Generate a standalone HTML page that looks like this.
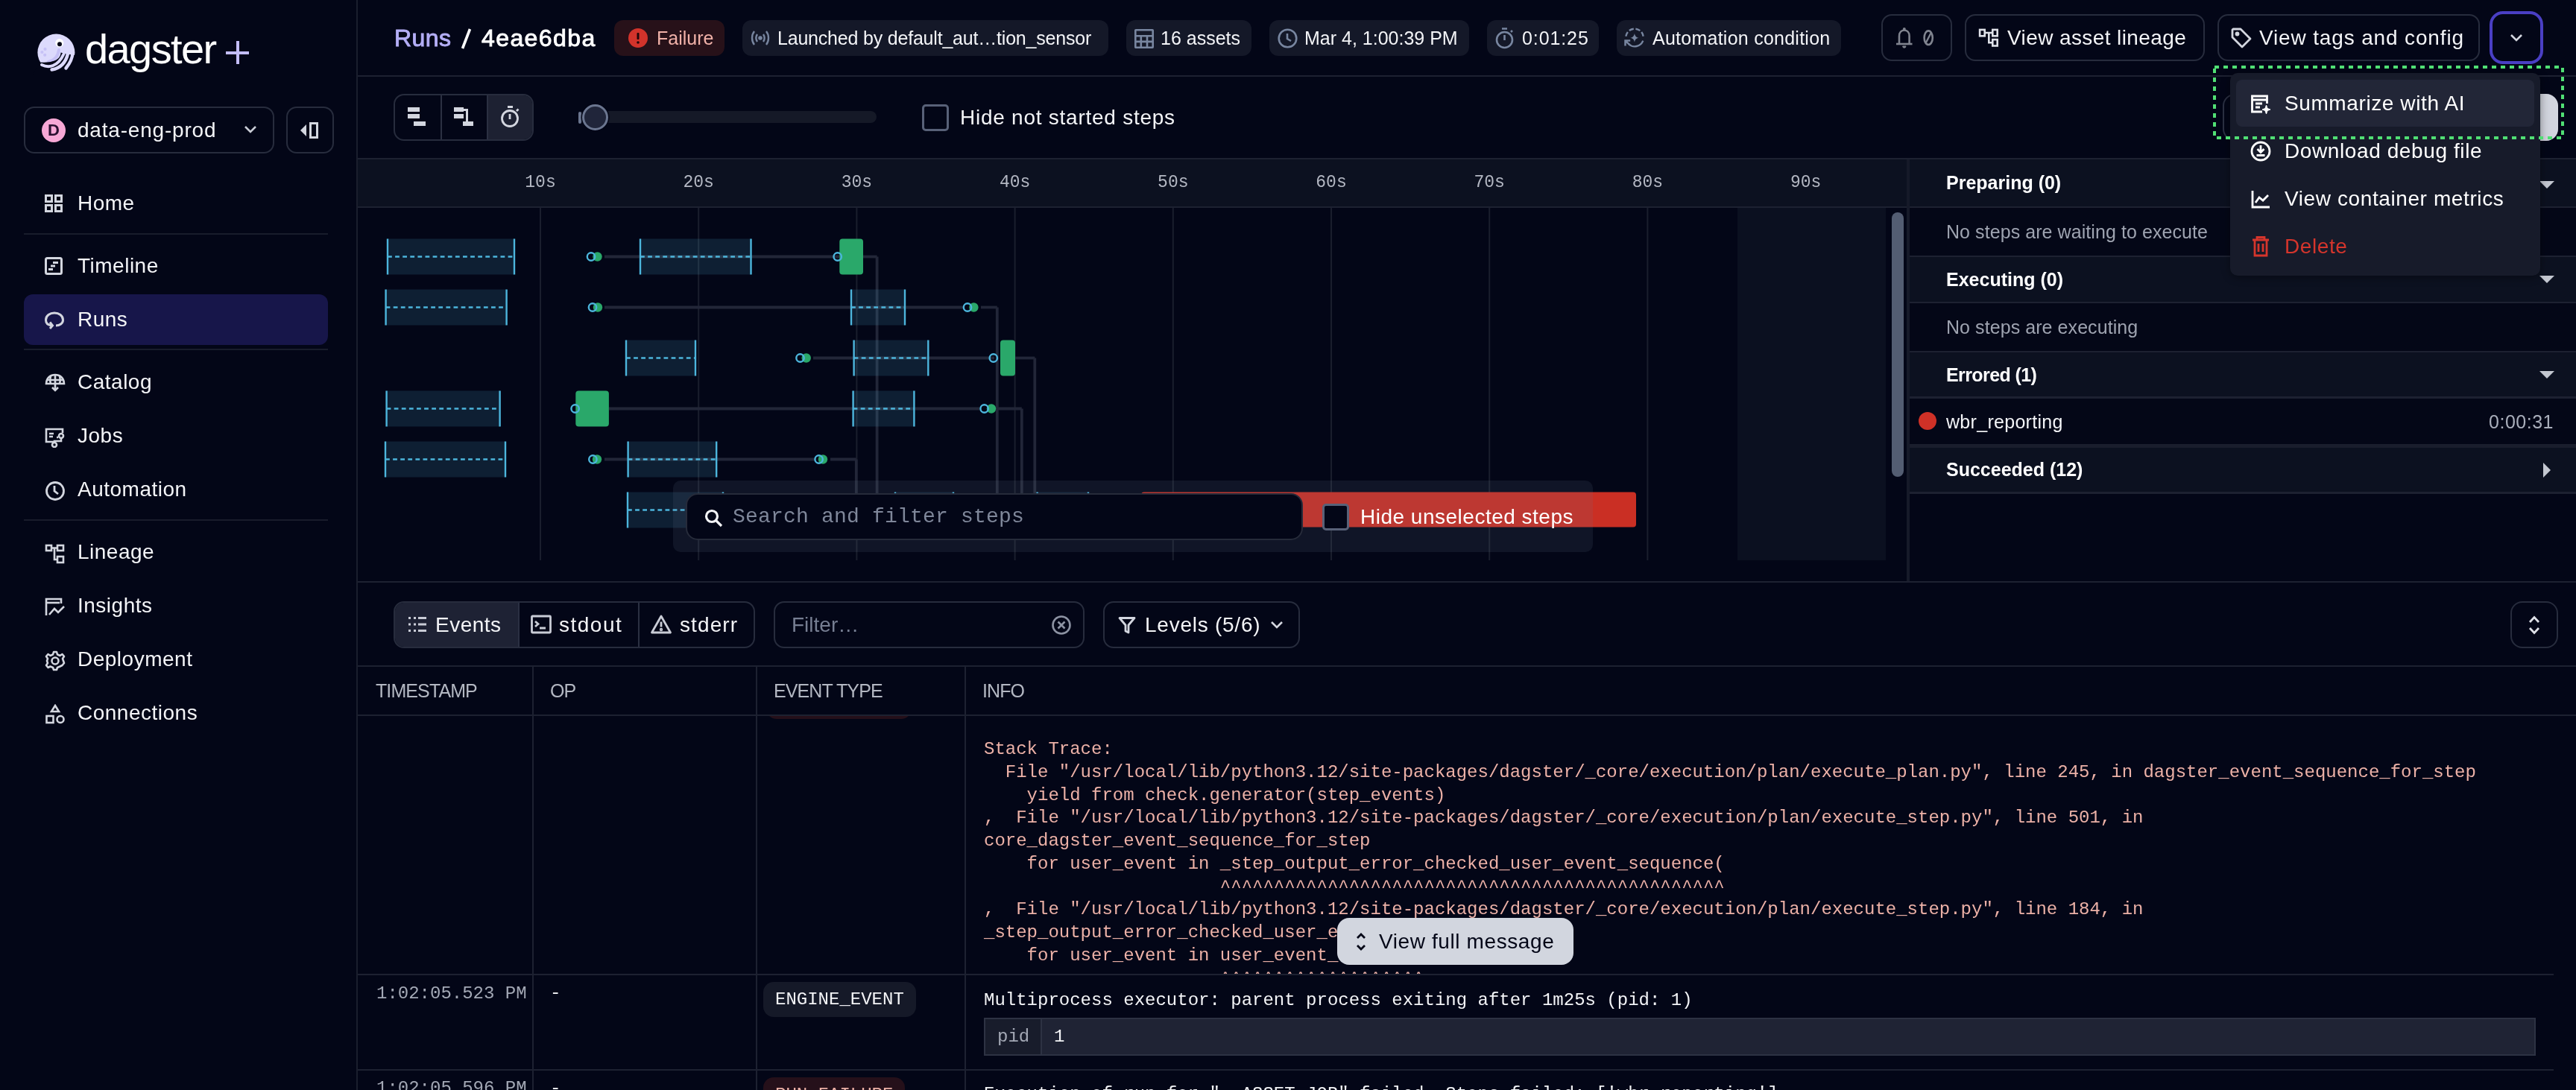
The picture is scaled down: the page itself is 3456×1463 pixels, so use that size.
<!DOCTYPE html>
<html><head><meta charset="utf-8">
<style>
*{box-sizing:border-box}
html,body{margin:0;padding:0}
body{will-change:transform;-webkit-font-smoothing:antialiased}
body{width:3456px;height:1463px;overflow:hidden;background:#030617;font-family:"Liberation Sans",sans-serif;color:#f3f4f7;position:relative}
.a{position:absolute}
.mono{font-family:"Liberation Mono",monospace}
.hl{position:absolute;height:2px;background:#1d2131}
.vl{position:absolute;width:2px;background:#1d2131}
.nav{position:absolute;left:32px;width:408px;height:68px;border-radius:12px}
.nav svg{position:absolute;left:28px;top:22px}
.nav span{position:absolute;left:72px;top:0;line-height:68px;font-size:28px;color:#f3f4f7;letter-spacing:0.5px}
.chip{position:absolute;top:27px;height:48px;border-radius:12px;background:#141828}
.chip svg{position:absolute;top:11px}
.chip span{position:absolute;top:0;line-height:48px;font-size:25px;color:#f3f4f7;white-space:nowrap}
.btn{position:absolute;border:2px solid #272c3d;border-radius:14px}
.btn span{position:absolute;white-space:nowrap}
</style></head><body>

<!-- SIDEBAR -->
<div class="a" style="left:0;top:0;width:478px;height:1463px;background:#030617"></div>
<div class="vl" style="left:478px;top:0;height:1463px;background:#1a1e2d"></div>

<!-- logo -->
<svg class="a" style="left:44px;top:40px" width="64" height="60" viewBox="0 0 64 60">
  <circle cx="31.4" cy="30.5" r="25" fill="#dcdafc"/>
  <path d="M35 27 C34 35, 30 41, 21 43" stroke="#c6c1f6" stroke-width="4" fill="none" stroke-linecap="round"/>
  <path d="M37.6 30.5 C37 39, 30 44.5, 9 43.8 L0 60 L64 60 L64 35 L53 33.5 L45 32.5 Z" fill="#030617"/>
  <path d="M12 47 C21 51.5, 33.5 50, 41.5 32.5" stroke="#dcdafc" stroke-width="4" fill="none" stroke-linecap="round"/>
  <path d="M25.5 53.5 C35 52, 44 46, 47.3 31" stroke="#dcdafc" stroke-width="4.4" fill="none" stroke-linecap="round"/>
  <path d="M44.5 51.5 C49 46, 53 40, 53.5 31" stroke="#dcdafc" stroke-width="4.4" fill="none" stroke-linecap="round"/>
  <circle cx="35.8" cy="17.6" r="5.6" fill="#fff"/><circle cx="36" cy="19.3" r="3" fill="#030617"/>
  <circle cx="16.5" cy="25.9" r="2.1" fill="#c6c1f6"/><circle cx="12.4" cy="30" r="2.1" fill="#c6c1f6"/><circle cx="16.2" cy="33.8" r="2.1" fill="#c6c1f6"/>
</svg>
<div class="a" style="left:114px;top:26px;font-size:56px;line-height:80px;color:#fff;letter-spacing:-1.6px">dagster</div>
<div class="a" style="left:303px;top:69px;width:31px;height:4px;background:#c3bdf7"></div>
<div class="a" style="left:316.5px;top:55px;width:4px;height:31px;background:#c3bdf7"></div>

<!-- workspace selector -->
<div class="btn" style="left:32px;top:143px;width:336px;height:63px;border-radius:14px"></div>
<div class="a" style="left:56px;top:159px;width:32px;height:32px;border-radius:16px;background:#f7a8d6;color:#2a1030;font-size:22px;font-weight:bold;text-align:center;line-height:32px">D</div>
<div class="a" style="left:104px;top:143px;line-height:63px;font-size:28px;color:#f3f4f7;letter-spacing:0.8px">data-eng-prod</div>
<svg class="a" style="left:326px;top:166px" width="20" height="16" viewBox="0 0 20 16"><path d="M3 4 L10 11 L17 4" stroke="#c9ccd6" stroke-width="2.6" fill="none"/></svg>
<div class="btn" style="left:384px;top:143px;width:64px;height:63px;border-radius:14px"></div>
<svg class="a" style="left:401px;top:162px" width="30" height="26" viewBox="0 0 30 26"><path d="M2 13 L10 5 L10 21 Z" fill="#d3d6df"/><rect x="15.5" y="3.5" width="9" height="19" stroke="#d3d6df" stroke-width="3" fill="none"/></svg>

<!-- nav -->
<div class="nav" style="top:239px"><svg width="24" height="24" viewBox="0 0 24 24" fill="none" stroke="#d3d6df" stroke-width="3"><rect x="1.5" y="1.5" width="8" height="8"/><rect x="14.5" y="1.5" width="8" height="8"/><rect x="1.5" y="14.5" width="8" height="8"/><rect x="14.5" y="14.5" width="8" height="8"/></svg><span>Home</span></div>
<div class="hl" style="left:32px;top:313px;width:408px;background:#181c2b"></div>
<div class="nav" style="top:323px"><svg width="24" height="24" viewBox="0 0 24 24" fill="none" stroke="#d3d6df" stroke-width="3"><rect x="1.5" y="1.5" width="21" height="21" rx="2"/><path d="M11 7.5H18M8 12H14M5 16.5H11"/></svg><span>Timeline</span></div>
<div class="nav" style="top:395px;background:#17164a"><svg width="26" height="26" viewBox="0 0 26 26" fill="none" stroke="#d3d6df" stroke-width="3"><path d="M9 20 C3 19 1.5 15.5 1.5 12.5 C1.5 6.5 7 3 13 3 C19 3 24.5 6.5 24.5 12.5 C24.5 17 20 20 15 20"/><path d="M7 15.5 L10.5 20 L7 24"/></svg><span>Runs</span></div>
<div class="hl" style="left:32px;top:468px;width:408px;background:#181c2b"></div>
<div class="nav" style="top:479px"><svg width="28" height="26" viewBox="0 0 28 26" fill="none" stroke="#d3d6df" stroke-width="2.6"><path d="M2 14 C2 6 8 2 14 2 C20 2 26 6 26 14 Z"/><path d="M14 2 V22 M8 4 C7 8 7 11 8 14 M20 4 C21 8 21 11 20 14 M2 9 H26"/><path d="M10 19 L14 23 L18 19"/></svg><span>Catalog</span></div>
<div class="nav" style="top:551px"><svg width="28" height="28" viewBox="0 0 28 28" fill="none" stroke="#d3d6df" stroke-width="2.6"><path d="M13 20 H2 V3 H24 V8"/><path d="M6 9 H12 M6 13 H11"/><circle cx="22" cy="12" r="3"/><circle cx="13" cy="24" r="3"/><path d="M22 15 V19 H13 V21 M16 14 H18"/></svg><span>Jobs</span></div>
<div class="nav" style="top:623px"><svg width="28" height="28" viewBox="0 0 28 28" fill="none" stroke="#d3d6df" stroke-width="2.8"><circle cx="14" cy="14" r="11.5"/><path d="M13 7 V14 L18 18"/></svg><span>Automation</span></div>
<div class="hl" style="left:32px;top:697px;width:408px;background:#181c2b"></div>
<div class="nav" style="top:707px"><svg width="28" height="28" viewBox="0 0 28 28" fill="none" stroke="#d3d6df" stroke-width="2.6"><rect x="2" y="3" width="7" height="7"/><rect x="17" y="3" width="8" height="7"/><rect x="17" y="18" width="8" height="8"/><path d="M9 6.5 H17 M13 6.5 V22 H17"/></svg><span>Lineage</span></div>
<div class="nav" style="top:779px"><svg width="28" height="28" viewBox="0 0 28 28" fill="none" stroke="#d3d6df" stroke-width="2.6"><path d="M2 25 V3 H22 V9"/><path d="M2 8 H20"/><path d="M6 24 L13 16 L18 21 L26 13"/></svg><span>Insights</span></div>
<div class="nav" style="top:851px"><svg width="28" height="28" viewBox="0 0 28 28" fill="none" stroke="#d3d6df" stroke-width="2.6"><circle cx="14" cy="14" r="4.5"/><path d="M12 2 H16 L17 5.5 L20.5 7 L23.5 5 L26 8 L24 11 L25 14 L26 17 L23.5 20 L20.5 21.5 L17 23 L16 26 H12 L11 23 L7.5 21.5 L4.5 23 L2 20 L4 17 L3 14 L4 11 L2 8 L4.5 5 L7.5 7 L11 5.5 Z" stroke-linejoin="round"/></svg><span>Deployment</span></div>
<div class="nav" style="top:923px"><svg width="28" height="28" viewBox="0 0 28 28" fill="none" stroke="#d3d6df" stroke-width="2.6"><path d="M14 2 L19 10 H9 Z"/><rect x="2.5" y="16" width="9" height="9"/><circle cx="21" cy="20.5" r="4.5"/></svg><span>Connections</span></div>

<!-- HEADER -->
<div class="hl" style="left:480px;top:101px;width:2976px"></div>
<div class="a" style="left:529px;top:20px;line-height:62px;font-size:32px;color:#b4aef6;letter-spacing:0.4px;-webkit-text-stroke:0.9px #b4aef6">Runs</div>
<svg class="a" style="left:617px;top:36px" width="18" height="32" viewBox="0 0 18 32"><path d="M3.5 29 L13.5 3" stroke="#fff" stroke-width="3.6"/></svg>
<div class="a" style="left:646px;top:20px;line-height:62px;font-size:32px;color:#fff;letter-spacing:1.4px;-webkit-text-stroke:0.9px #fff">4eae6dba</div>

<div class="chip" style="left:824px;width:148px;background:#271119"><svg style="left:19px" width="26" height="26" viewBox="0 0 26 26"><circle cx="13" cy="13" r="13" fill="#d2332b"/><rect x="11.5" y="6" width="3" height="9" rx="1" fill="#22060a"/><circle cx="13" cy="19" r="1.8" fill="#22060a"/></svg><span style="left:57px;color:#f0b1a8">Failure</span></div>
<div class="chip" style="left:996px;width:491px"><svg style="left:10px;top:12px" width="28" height="24" viewBox="0 0 28 24" fill="none" stroke="#7886a0" stroke-width="2.4"><path d="M6 3 C2 8 2 16 6 21 M22 3 C26 8 26 16 22 21 M10 7 C8 10 8 14 10 17 M18 7 C20 10 20 14 18 17"/><circle cx="14" cy="12" r="1.6" fill="#7886a0"/></svg><span style="left:47px;letter-spacing:-0.2px">Launched by default_aut…tion_sensor</span></div>
<div class="chip" style="left:1511px;width:168px"><svg style="left:11px;top:12px" width="26" height="26" viewBox="0 0 26 26" fill="none" stroke="#7886a0" stroke-width="2.6"><rect x="1.3" y="1.3" width="23.4" height="23.4" rx="0.5"/><path d="M1.3 9.3H24.7M1.3 16.9H24.7M8.8 9.3V24.7M17 9.3V24.7"/></svg><span style="left:46px">16 assets</span></div>
<div class="chip" style="left:1703px;width:268px"><svg style="left:11px" width="27" height="27" viewBox="0 0 27 27" fill="none" stroke="#7886a0" stroke-width="2.6"><circle cx="13.5" cy="13.5" r="11.8"/><path d="M13 7V14L18 17"/></svg><span style="left:47px">Mar 4, 1:00:39 PM</span></div>
<div class="chip" style="left:1995px;width:150px"><svg style="left:11px;top:9px" width="26" height="30" viewBox="0 0 26 30" fill="none" stroke="#7886a0" stroke-width="2.6"><circle cx="12.5" cy="17.5" r="10.5"/><path d="M9 2.5H16M12.5 11V18M21 7L23 5"/></svg><span style="left:47px;letter-spacing:0.9px">0:01:25</span></div>
<div class="chip" style="left:2169px;width:301px"><svg style="left:10px;top:10px" width="28" height="28" viewBox="0 0 28 28" fill="none" stroke="#7886a0" stroke-width="2.4"><path d="M2.32 11.76 A11.8 11.8 0 0 1 25.68 11.76" stroke-dasharray="6.4 2.7"/><path d="M25.3 17.6 A11.8 11.8 0 0 1 6 22"/><path d="M1.5 24.4 V17.6 H8.2 M1.8 17.8 L6.8 22.6" stroke-width="2.5"/><path d="M13.9 7.9 Q14.7 12.9 19.3 13.7 Q14.7 14.5 13.9 19.5 Q13.1 14.5 8.5 13.7 Q13.1 12.9 13.9 7.9 Z" fill="#7886a0" stroke="none"/></svg><span style="left:48px;letter-spacing:0.25px">Automation condition</span></div>

<div class="btn" style="left:2524px;top:19px;width:95px;height:63px"></div>
<svg class="a" style="left:2540px;top:34px" width="64" height="34" viewBox="0 0 64 34" fill="none" stroke="#80848f" stroke-width="2.6">
<circle cx="14.8" cy="5" r="2" fill="#80848f" stroke="none"/>
<path d="M8 24 V14.5 C8 9.5 11 6.5 14.8 6.5 C18.6 6.5 21.6 9.5 21.6 14.5 V24"/>
<path d="M4 25 H25.5"/>
<path d="M12.6 28 A2.2 2.2 0 0 0 17 28 Z" fill="#80848f" stroke-width="1"/>
<ellipse cx="47.2" cy="16.7" rx="5.6" ry="9.3"/>
<path d="M43.5 24 L51 9.5" stroke-width="2.4"/>
</svg>
<div class="btn" style="left:2636px;top:19px;width:322px;height:63px"></div>
<svg class="a" style="left:2654px;top:38px" width="28" height="26" viewBox="0 0 28 26" fill="none" stroke="#dfe1e8" stroke-width="2.6"><rect x="2.1" y="1.9" width="6.6" height="8.4"/><rect x="19.3" y="1.9" width="6.4" height="8.4"/><rect x="19.3" y="15.1" width="6.4" height="8.4"/><path d="M8.7 6 H19.3 M14.3 6 V19.3 H19.3"/></svg>
<div class="a" style="left:2693px;top:19px;line-height:63px;font-size:28px;color:#f3f4f7;letter-spacing:0.4px">View asset lineage</div>
<div class="btn" style="left:2975px;top:19px;width:352px;height:63px"></div>
<svg class="a" style="left:2993px;top:37px" width="28" height="28" viewBox="0 0 28 28" fill="none" stroke="#d3d6df" stroke-width="2.8"><path d="M2 3 V13 L15 26 L26 15 L13 2 H3 Z" stroke-linejoin="round"/><circle cx="8.5" cy="8.5" r="1.5" fill="#d3d6df"/></svg>
<div class="a" style="left:3031px;top:19px;line-height:63px;font-size:28px;color:#f3f4f7;letter-spacing:0.85px">View tags and config</div>
<div class="a" style="left:3340px;top:15px;width:72px;height:71px;border:4px solid #4a3fc4;border-radius:18px"></div>
<svg class="a" style="left:3366px;top:44px" width="20" height="14" viewBox="0 0 20 14"><path d="M3 3 L10 10 L17 3" stroke="#d3d6df" stroke-width="2.6" fill="none"/></svg>

<!-- TOOLBAR -->
<div class="hl" style="left:480px;top:212px;width:2976px"></div>
<div class="btn" style="left:528px;top:126px;width:188px;height:63px;overflow:hidden">
  <div class="a" style="left:124px;top:0;width:62px;height:59px;background:#1d2132"></div>
  <div class="a" style="left:61px;top:0;width:2px;height:59px;background:#2b3042"></div>
  <div class="a" style="left:123px;top:0;width:2px;height:59px;background:#2b3042"></div>
</div>
<svg class="a" style="left:547px;top:143px" width="26" height="28" viewBox="0 0 26 28" fill="#d3d6df"><rect x="0" y="1" width="16" height="6"/><rect x="0" y="10" width="16" height="6"/><rect x="8" y="20" width="16" height="6"/></svg>
<svg class="a" style="left:609px;top:143px" width="26" height="28" viewBox="0 0 26 28" fill="#d3d6df"><rect x="0" y="1" width="13" height="6"/><rect x="0" y="10" width="13" height="6"/><rect x="12" y="20" width="14" height="6"/><rect x="13" y="3" width="6" height="3"/><rect x="16" y="3" width="3" height="18"/></svg>
<svg class="a" style="left:671px;top:141px" width="28" height="31" viewBox="0 0 28 31" fill="none" stroke="#d3d6df" stroke-width="2.8"><circle cx="13" cy="18" r="10.5"/><path d="M10 2.5H17M13 12V19M22 8L24.5 5.5"/></svg>
<div class="a" style="left:776px;top:149px;width:400px;height:16px;border-radius:8px;background:#151927"></div>
<div class="a" style="left:776px;top:150px;width:4px;height:16px;border-radius:2px;background:#6b7690"></div>
<div class="a" style="left:781px;top:140px;width:35px;height:35px;border-radius:18px;background:#20253a;border:3.6px solid #6b7690;box-shadow:0 0 0 1.5px #030617"></div>
<div class="a" style="left:1237px;top:140px;width:36px;height:36px;border-radius:5px;border:3.5px solid #586178"></div>
<div class="a" style="left:1288px;top:126px;line-height:63px;font-size:28px;color:#f3f4f7;letter-spacing:0.75px">Hide not started steps</div>

<!-- TIMELINE -->
<svg class="a" style="left:0;top:0" width="3456" height="1463">
<rect x="480" y="214" width="2079" height="63" fill="#0c1120"/>
<rect x="480" y="277" width="2079" height="2" fill="#1d2131"/>
<rect x="724.0" y="279" width="2" height="473" fill="#1a1e2d"/>
<text x="725.0" y="251" text-anchor="middle" font-family="Liberation Mono" font-size="23" fill="#b4b8c3">10s</text>
<rect x="936.2" y="279" width="2" height="473" fill="#1a1e2d"/>
<text x="937.2" y="251" text-anchor="middle" font-family="Liberation Mono" font-size="23" fill="#b4b8c3">20s</text>
<rect x="1148.4" y="279" width="2" height="473" fill="#1a1e2d"/>
<text x="1149.4" y="251" text-anchor="middle" font-family="Liberation Mono" font-size="23" fill="#b4b8c3">30s</text>
<rect x="1360.6" y="279" width="2" height="473" fill="#1a1e2d"/>
<text x="1361.6" y="251" text-anchor="middle" font-family="Liberation Mono" font-size="23" fill="#b4b8c3">40s</text>
<rect x="1572.8" y="279" width="2" height="473" fill="#1a1e2d"/>
<text x="1573.8" y="251" text-anchor="middle" font-family="Liberation Mono" font-size="23" fill="#b4b8c3">50s</text>
<rect x="1785.0" y="279" width="2" height="473" fill="#1a1e2d"/>
<text x="1786.0" y="251" text-anchor="middle" font-family="Liberation Mono" font-size="23" fill="#b4b8c3">60s</text>
<rect x="1997.2" y="279" width="2" height="473" fill="#1a1e2d"/>
<text x="1998.2" y="251" text-anchor="middle" font-family="Liberation Mono" font-size="23" fill="#b4b8c3">70s</text>
<rect x="2209.4" y="279" width="2" height="473" fill="#1a1e2d"/>
<text x="2210.4" y="251" text-anchor="middle" font-family="Liberation Mono" font-size="23" fill="#b4b8c3">80s</text>
<rect x="2421.6" y="279" width="2" height="473" fill="#1a1e2d"/>
<text x="2422.6" y="251" text-anchor="middle" font-family="Liberation Mono" font-size="23" fill="#b4b8c3">90s</text>
<rect x="2331" y="279" width="199" height="473" fill="#0b1020"/>
<line x1="811" y1="344.5" x2="1126" y2="344.5" stroke="#222638" stroke-width="3.8"/>
<line x1="1158" y1="344.5" x2="1176.6" y2="344.5" stroke="#222638" stroke-width="3.8"/>
<line x1="1176.6" y1="344.5" x2="1176.6" y2="700" stroke="#222638" stroke-width="3.8"/>
<line x1="811" y1="412.5" x2="1292" y2="412.5" stroke="#222638" stroke-width="3.8"/>
<line x1="1316" y1="412.5" x2="1337.8" y2="412.5" stroke="#222638" stroke-width="3.8"/>
<line x1="1337.8" y1="412.5" x2="1337.8" y2="700" stroke="#222638" stroke-width="3.8"/>
<line x1="1091" y1="480.5" x2="1334" y2="480.5" stroke="#222638" stroke-width="3.8"/>
<line x1="1362" y1="480.5" x2="1388.3" y2="480.5" stroke="#222638" stroke-width="3.8"/>
<line x1="1388.3" y1="480.5" x2="1388.3" y2="700" stroke="#222638" stroke-width="3.8"/>
<line x1="817" y1="548.5" x2="1314" y2="548.5" stroke="#222638" stroke-width="3.8"/>
<line x1="1338" y1="548.5" x2="1370.8" y2="548.5" stroke="#222638" stroke-width="3.8"/>
<line x1="1370.8" y1="548.5" x2="1370.8" y2="700" stroke="#222638" stroke-width="3.8"/>
<line x1="811" y1="616.5" x2="1093" y2="616.5" stroke="#222638" stroke-width="3.8"/>
<line x1="1114" y1="616.5" x2="1148.8" y2="616.5" stroke="#222638" stroke-width="3.8"/>
<line x1="1148.8" y1="616.5" x2="1148.8" y2="700" stroke="#222638" stroke-width="3.8"/>
<rect x="520" y="320.5" width="170" height="48" fill="rgba(80,175,215,0.15)"/><line x1="520" y1="344.5" x2="690" y2="344.5" stroke="#4cb5dc" stroke-width="2.4" stroke-dasharray="5.8 4.3"/><rect x="518.8" y="320.5" width="2.4" height="48" fill="#4cb5dc"/><rect x="688.8" y="320.5" width="2.4" height="48" fill="#4cb5dc"/>
<rect x="859" y="320.5" width="148.5" height="48" fill="rgba(80,175,215,0.15)"/><line x1="859" y1="344.5" x2="1007.5" y2="344.5" stroke="#4cb5dc" stroke-width="2.4" stroke-dasharray="5.8 4.3"/><rect x="857.8" y="320.5" width="2.4" height="48" fill="#4cb5dc"/><rect x="1006.3" y="320.5" width="2.4" height="48" fill="#4cb5dc"/>
<rect x="517.6" y="388.5" width="162.0" height="48" fill="rgba(80,175,215,0.15)"/><line x1="517.6" y1="412.5" x2="679.6" y2="412.5" stroke="#4cb5dc" stroke-width="2.4" stroke-dasharray="5.8 4.3"/><rect x="516.4" y="388.5" width="2.4" height="48" fill="#4cb5dc"/><rect x="678.4" y="388.5" width="2.4" height="48" fill="#4cb5dc"/>
<rect x="1142" y="388.5" width="72" height="48" fill="rgba(80,175,215,0.15)"/><line x1="1142" y1="412.5" x2="1214" y2="412.5" stroke="#4cb5dc" stroke-width="2.4" stroke-dasharray="5.8 4.3"/><rect x="1140.8" y="388.5" width="2.4" height="48" fill="#4cb5dc"/><rect x="1212.8" y="388.5" width="2.4" height="48" fill="#4cb5dc"/>
<rect x="840" y="456.5" width="93" height="48" fill="rgba(80,175,215,0.15)"/><line x1="840" y1="480.5" x2="933" y2="480.5" stroke="#4cb5dc" stroke-width="2.4" stroke-dasharray="5.8 4.3"/><rect x="838.8" y="456.5" width="2.4" height="48" fill="#4cb5dc"/><rect x="931.8" y="456.5" width="2.4" height="48" fill="#4cb5dc"/>
<rect x="1145.6" y="456.5" width="99.70000000000005" height="48" fill="rgba(80,175,215,0.15)"/><line x1="1145.6" y1="480.5" x2="1245.3" y2="480.5" stroke="#4cb5dc" stroke-width="2.4" stroke-dasharray="5.8 4.3"/><rect x="1144.4" y="456.5" width="2.4" height="48" fill="#4cb5dc"/><rect x="1244.1" y="456.5" width="2.4" height="48" fill="#4cb5dc"/>
<rect x="518.6" y="524.5" width="152.0" height="48" fill="rgba(80,175,215,0.15)"/><line x1="518.6" y1="548.5" x2="670.6" y2="548.5" stroke="#4cb5dc" stroke-width="2.4" stroke-dasharray="5.8 4.3"/><rect x="517.4" y="524.5" width="2.4" height="48" fill="#4cb5dc"/><rect x="669.4" y="524.5" width="2.4" height="48" fill="#4cb5dc"/>
<rect x="1144.6" y="524.5" width="81.80000000000018" height="48" fill="rgba(80,175,215,0.15)"/><line x1="1144.6" y1="548.5" x2="1226.4" y2="548.5" stroke="#4cb5dc" stroke-width="2.4" stroke-dasharray="5.8 4.3"/><rect x="1143.4" y="524.5" width="2.4" height="48" fill="#4cb5dc"/><rect x="1225.2" y="524.5" width="2.4" height="48" fill="#4cb5dc"/>
<rect x="517" y="592.5" width="161" height="48" fill="rgba(80,175,215,0.15)"/><line x1="517" y1="616.5" x2="678" y2="616.5" stroke="#4cb5dc" stroke-width="2.4" stroke-dasharray="5.8 4.3"/><rect x="515.8" y="592.5" width="2.4" height="48" fill="#4cb5dc"/><rect x="676.8" y="592.5" width="2.4" height="48" fill="#4cb5dc"/>
<rect x="842.6" y="592.5" width="118.60000000000002" height="48" fill="rgba(80,175,215,0.15)"/><line x1="842.6" y1="616.5" x2="961.2" y2="616.5" stroke="#4cb5dc" stroke-width="2.4" stroke-dasharray="5.8 4.3"/><rect x="841.4" y="592.5" width="2.4" height="48" fill="#4cb5dc"/><rect x="960.0" y="592.5" width="2.4" height="48" fill="#4cb5dc"/>
<rect x="842" y="660.5" width="128" height="48" fill="rgba(80,175,215,0.15)"/><line x1="842" y1="684.5" x2="970" y2="684.5" stroke="#4cb5dc" stroke-width="2.4" stroke-dasharray="5.8 4.3"/><rect x="840.8" y="660.5" width="2.4" height="48" fill="#4cb5dc"/><rect x="968.8" y="660.5" width="2.4" height="48" fill="#4cb5dc"/>
<rect x="1201" y="660.5" width="78" height="48" fill="rgba(80,175,215,0.15)"/><line x1="1201" y1="684.5" x2="1279" y2="684.5" stroke="#4cb5dc" stroke-width="2.4" stroke-dasharray="5.8 4.3"/><rect x="1199.8" y="660.5" width="2.4" height="48" fill="#4cb5dc"/><rect x="1277.8" y="660.5" width="2.4" height="48" fill="#4cb5dc"/>
<rect x="1391.6" y="660.5" width="68.40000000000009" height="48" fill="rgba(80,175,215,0.15)"/><line x1="1391.6" y1="684.5" x2="1460" y2="684.5" stroke="#4cb5dc" stroke-width="2.4" stroke-dasharray="5.8 4.3"/><rect x="1390.4" y="660.5" width="2.4" height="48" fill="#4cb5dc"/><rect x="1458.8" y="660.5" width="2.4" height="48" fill="#4cb5dc"/>
<rect x="1126.3" y="320.5" width="31.700000000000045" height="48" rx="4" fill="#2aa86a"/>
<rect x="1342" y="456.5" width="20" height="48" rx="4" fill="#2aa86a"/>
<rect x="772.3" y="524.5" width="44.60000000000002" height="48" rx="4" fill="#2aa86a"/>
<circle cx="801.5" cy="344.5" r="6.2" fill="#2aa86a"/><circle cx="793" cy="344.5" r="5.2" fill="none" stroke="#4cb5dc" stroke-width="2.4"/>
<circle cx="1123.7" cy="344.5" r="5.2" fill="none" stroke="#4cb5dc" stroke-width="2.4"/>
<circle cx="802" cy="412.5" r="6.2" fill="#2aa86a"/><circle cx="795" cy="412.5" r="5.2" fill="none" stroke="#4cb5dc" stroke-width="2.4"/>
<circle cx="1306.4" cy="412.5" r="6.2" fill="#2aa86a"/><circle cx="1298" cy="412.5" r="5.2" fill="none" stroke="#4cb5dc" stroke-width="2.4"/>
<circle cx="1081.7" cy="480.5" r="6.2" fill="#2aa86a"/><circle cx="1073.5" cy="480.5" r="5.2" fill="none" stroke="#4cb5dc" stroke-width="2.4"/>
<circle cx="1332.8" cy="480.5" r="5.2" fill="none" stroke="#4cb5dc" stroke-width="2.4"/>
<circle cx="771.6" cy="548.5" r="5.2" fill="none" stroke="#4cb5dc" stroke-width="2.4"/>
<circle cx="1330" cy="548.5" r="6.2" fill="#2aa86a"/><circle cx="1320.6" cy="548.5" r="5.2" fill="none" stroke="#4cb5dc" stroke-width="2.4"/>
<circle cx="801" cy="616.5" r="6.2" fill="#2aa86a"/><circle cx="795.4" cy="616.5" r="5.2" fill="none" stroke="#4cb5dc" stroke-width="2.4"/>
<circle cx="1104" cy="616.5" r="6.2" fill="#2aa86a"/><circle cx="1098.6" cy="616.5" r="5.2" fill="none" stroke="#4cb5dc" stroke-width="2.4"/>
<rect x="1531" y="660.5" width="664" height="47" rx="4" fill="#ca2f24"/>
<rect x="2538" y="285" width="16" height="355" rx="8" fill="#535d72"/>
</svg>
<div class="a" style="left:903px;top:645px;width:1234px;height:96px;border-radius:10px;background:rgba(110,120,150,0.13)"></div>
<div class="a" style="left:920px;top:662px;width:828px;height:63px;border-radius:16px;background:#030617;border:2px solid #262b3a"></div>
<svg class="a" style="left:945px;top:683px" width="26" height="26" viewBox="0 0 26 26" fill="none" stroke="#f3f4f7" stroke-width="3.2"><circle cx="10" cy="10" r="7.5"/><path d="M15.5 15.5 L23 23"/></svg>
<div class="a mono" style="left:983px;top:662px;line-height:63px;font-size:28px;color:#7f879a;letter-spacing:0.2px">Search and filter steps</div>
<div class="a" style="left:1774px;top:676px;width:36px;height:36px;border-radius:5px;border:3.5px solid #586178;background:#030617"></div>
<div class="a" style="left:1825px;top:662px;line-height:63px;font-size:28px;color:#fff;letter-spacing:0.5px">Hide unselected steps</div>
<div class="vl" style="left:2558px;top:214px;width:4px;height:567px;background:#161a29"></div>

<!-- RIGHT PANEL -->
<div class="a" style="left:2562px;top:214px;width:894px;height:63px;background:#0c1120"></div>
<div class="hl" style="left:2562px;top:277px;width:894px"></div>
<div class="a" style="left:2562px;top:279px;width:894px;height:64px;background:#040717"></div>
<div class="hl" style="left:2562px;top:343px;width:894px;height:2.5px"></div>
<div class="a" style="left:2562px;top:345px;width:894px;height:60px;background:#0c1120"></div>
<div class="hl" style="left:2562px;top:404.5px;width:894px;height:2.5px"></div>
<div class="a" style="left:2562px;top:407px;width:894px;height:64px;background:#040717"></div>
<div class="hl" style="left:2562px;top:470.5px;width:894px;height:2.5px"></div>
<div class="a" style="left:2562px;top:473px;width:894px;height:60px;background:#0c1120"></div>
<div class="hl" style="left:2562px;top:532px;width:894px;height:3px"></div>
<div class="a" style="left:2562px;top:535px;width:894px;height:62px;background:#040717"></div>
<div class="hl" style="left:2562px;top:596px;width:894px;height:5px;background:#1a1e2d"></div>
<div class="a" style="left:2562px;top:601px;width:894px;height:59px;background:#0c1120"></div>
<div class="hl" style="left:2562px;top:660px;width:894px;height:3px"></div>
<div class="a" style="left:2611px;top:214px;line-height:63px;font-size:25px;font-weight:bold;color:#fff">Preparing (0)</div>
<div class="a" style="left:2611px;top:279px;line-height:64px;font-size:25px;color:#9ea3b0;letter-spacing:0.07px">No steps are waiting to execute</div>
<div class="a" style="left:2611px;top:345px;line-height:60px;font-size:25px;font-weight:bold;color:#fff">Executing (0)</div>
<div class="a" style="left:2611px;top:407px;line-height:64px;font-size:25px;color:#9ea3b0;letter-spacing:0.07px">No steps are executing</div>
<div class="a" style="left:2611px;top:473px;line-height:60px;font-size:25px;font-weight:bold;color:#fff;letter-spacing:-0.6px">Errored (1)</div>
<div class="a" style="left:2574px;top:553px;width:24px;height:24px;border-radius:12px;background:#cf3127"></div>
<div class="a" style="left:2611px;top:535px;line-height:62px;font-size:25px;color:#f3f4f7;letter-spacing:0.3px">wbr_reporting</div>
<div class="a" style="left:3226px;width:200px;text-align:right;top:535px;line-height:62px;font-size:25px;color:#a9aebb;letter-spacing:0.5px;padding-right:0">0:00:31</div>
<div class="a" style="left:2611px;top:599px;line-height:62px;font-size:25px;font-weight:bold;color:#fff">Succeeded (12)</div>
<svg class="a" style="left:3406px;top:242px" width="22" height="12"><path d="M1 1 H21 L11 11 Z" fill="#c3c7d0"/></svg>
<svg class="a" style="left:3406px;top:369px" width="22" height="12"><path d="M1 1 H21 L11 11 Z" fill="#c3c7d0"/></svg>
<svg class="a" style="left:3406px;top:497px" width="22" height="12"><path d="M1 1 H21 L11 11 Z" fill="#c3c7d0"/></svg>
<svg class="a" style="left:3411px;top:620px" width="12" height="22"><path d="M1 1 V21 L11 11 Z" fill="#c3c7d0"/></svg>

<!-- light button behind menu -->
<div class="a" style="left:2982px;top:126px;width:450px;height:63px;border-radius:16px;border:2px solid #2b3042;background:#030617"></div>
<div class="a" style="left:3330px;top:126px;width:102px;height:63px;border-radius:16px;background:linear-gradient(90deg,#6f7587,#c9ccd6 40%,#d3d6df)"></div>

<!-- MENU -->
<div class="a" style="left:2992px;top:98px;width:416px;height:272px;border-radius:10px;background:#171b2a;box-shadow:0 2px 12px rgba(0,0,0,0.4)"></div>
<div class="a" style="left:3000px;top:107px;width:400px;height:63px;border-radius:8px;background:#222637"></div>
<svg class="a" style="left:3019px;top:126px" width="28" height="28" viewBox="0 0 28 28" fill="none" stroke="#fff" stroke-width="2.8"><path d="M16 24 H2.5 V3 H22.5 V13"/><path d="M2.5 8 H22.5 M7 13 H16 M7 18 H13"/><path d="M21.5 15 L23 19.5 L27 21 L23 22.5 L21.5 27 L20 22.5 L16 21 L20 19.5 Z" fill="#fff" stroke-width="1"/></svg>
<div class="a" style="left:3065px;top:107px;line-height:63px;font-size:28px;color:#fff;letter-spacing:0.6px">Summarize with AI</div>
<svg class="a" style="left:3019px;top:189px" width="28" height="28" viewBox="0 0 28 28" fill="none" stroke="#fff" stroke-width="2.8"><circle cx="14" cy="14" r="12"/><path d="M14 6 V15 M9.5 11 L14 15.5 L18.5 11 M8.5 19.5 H19.5"/></svg>
<div class="a" style="left:3065px;top:171px;line-height:63px;font-size:28px;color:#fff;letter-spacing:0.6px">Download debug file</div>
<svg class="a" style="left:3019px;top:253px" width="28" height="28" viewBox="0 0 28 28" fill="none" stroke="#fff" stroke-width="2.8"><path d="M3 3 V25 H26"/><path d="M7 19 L12 12 L17 16 L24 9"/></svg>
<div class="a" style="left:3065px;top:235px;line-height:63px;font-size:28px;color:#fff;letter-spacing:0.6px">View container metrics</div>
<svg class="a" style="left:3020px;top:316px" width="26" height="30" viewBox="0 0 26 30" fill="none" stroke="#d5352c" stroke-width="2.8"><path d="M2 6 H24 M8 6 V2.5 H18 V6 M5 6 V27 H21 V6 M10 11 V22 M16 11 V22"/></svg>
<div class="a" style="left:3065px;top:299px;line-height:63px;font-size:28px;color:#d5352c;letter-spacing:0.6px">Delete</div>
<svg class="a" style="left:2967px;top:86px" width="476" height="104"><rect x="4" y="4" width="467" height="95" fill="none" stroke="#50df74" stroke-width="4" stroke-dasharray="6 6"/></svg>

<!-- BOTTOM -->
<div class="hl" style="left:480px;top:780px;width:2976px"></div>
<div class="btn" style="left:528px;top:807px;width:485px;height:63px;overflow:hidden">
  <div class="a" style="left:0;top:0;width:166px;height:59px;background:#1e2234"></div>
  <div class="a" style="left:165px;top:0;width:2px;height:59px;background:#2b3042"></div>
  <div class="a" style="left:326px;top:0;width:2px;height:59px;background:#2b3042"></div>
</div>
<svg class="a" style="left:547px;top:826px" width="26" height="24" viewBox="0 0 26 24" fill="#c9ccd6"><rect x="1" y="2" width="3" height="3"/><rect x="1" y="10.5" width="3" height="3"/><rect x="1" y="19" width="3" height="3"/><rect x="8" y="2" width="3" height="3"/><rect x="8" y="10.5" width="3" height="3"/><rect x="8" y="19" width="3" height="3"/><rect x="14" y="2" width="11" height="3"/><rect x="14" y="10.5" width="11" height="3"/><rect x="14" y="19" width="11" height="3"/></svg>
<div class="a" style="left:584px;top:807px;line-height:63px;font-size:28px;color:#f3f4f7;letter-spacing:0.5px">Events</div>
<svg class="a" style="left:712px;top:825px" width="28" height="26" viewBox="0 0 28 26" fill="none" stroke="#c9ccd6" stroke-width="2.8"><rect x="1.5" y="2" width="25" height="22" rx="1"/><path d="M6 9 L10 12.5 L6 16 M12 18 H20"/></svg>
<div class="a" style="left:750px;top:807px;line-height:63px;font-size:28px;color:#f3f4f7;letter-spacing:1.5px">stdout</div>
<svg class="a" style="left:872px;top:824px" width="30" height="28" viewBox="0 0 30 28" fill="none" stroke="#c9ccd6" stroke-width="2.8"><path d="M15 3 L27.5 25 H2.5 Z" stroke-linejoin="round"/><path d="M15 10.5 V17.5"/><circle cx="15" cy="21" r="0.8" fill="#c9ccd6"/></svg>
<div class="a" style="left:912px;top:807px;line-height:63px;font-size:28px;color:#f3f4f7;letter-spacing:1.1px">stderr</div>

<div class="btn" style="left:1038px;top:807px;width:417px;height:63px"></div>
<div class="a" style="left:1062px;top:807px;line-height:63px;font-size:28px;color:#767e92">Filter…</div>
<svg class="a" style="left:1410px;top:825px" width="28" height="28" viewBox="0 0 28 28" fill="none" stroke="#8d93a3" stroke-width="2.6"><circle cx="14" cy="14" r="11.5"/><path d="M9.5 9.5 L18.5 18.5 M18.5 9.5 L9.5 18.5"/></svg>
<div class="btn" style="left:1480px;top:807px;width:264px;height:63px"></div>
<svg class="a" style="left:1500px;top:827px" width="24" height="24" viewBox="0 0 24 24" fill="none" stroke="#d3d6df" stroke-width="2.8"><path d="M2 2.5 H22 L14 12 V22 L10 20 V12 Z" stroke-linejoin="round"/></svg>
<div class="a" style="left:1536px;top:807px;line-height:63px;font-size:28px;color:#f3f4f7;letter-spacing:0.75px">Levels (5/6)</div>
<svg class="a" style="left:1703px;top:832px" width="20" height="14" viewBox="0 0 20 14"><path d="M3 3 L10 10 L17 3" stroke="#d3d6df" stroke-width="2.6" fill="none"/></svg>
<div class="btn" style="left:3368px;top:807px;width:64px;height:63px;border-radius:16px"></div>
<svg class="a" style="left:3390px;top:824px" width="20" height="30" viewBox="0 0 20 30" fill="none" stroke="#dfe1e8" stroke-width="2.8"><path d="M4 11 L10 4.5 L16 11 M4 19 L10 25.5 L16 19"/></svg>

<div class="hl" style="left:480px;top:893px;width:2976px"></div>
<div class="hl" style="left:480px;top:959px;width:2976px"></div>
<div class="vl" style="left:714px;top:895px;height:568px"></div>
<div class="vl" style="left:1014px;top:895px;height:568px"></div>
<div class="vl" style="left:1294px;top:895px;height:568px"></div>
<div class="a" style="left:504px;top:895px;line-height:64px;font-size:25px;color:#b3b7c2;letter-spacing:-0.9px">TIMESTAMP</div>
<div class="a" style="left:738px;top:895px;line-height:64px;font-size:25px;color:#b3b7c2;letter-spacing:-0.9px">OP</div>
<div class="a" style="left:1038px;top:895px;line-height:64px;font-size:25px;color:#b3b7c2;letter-spacing:-0.9px">EVENT TYPE</div>
<div class="a" style="left:1318px;top:895px;line-height:64px;font-size:25px;color:#b3b7c2;letter-spacing:-0.9px">INFO</div>
<div class="a" style="left:1028px;top:949px;width:195px;height:16px;border-radius:0 0 14px 14px;background:#25101a"></div><div class="a" style="left:1016px;top:940px;width:270px;height:19px;background:#030617"></div>
<div class="hl" style="left:480px;top:959px;width:2976px"></div>

<div class="a" style="left:1296px;top:961px;width:2130px;height:346px;overflow:hidden"><pre class="a mono" style="margin:0;left:24px;top:30px;font-size:24px;line-height:30.75px;color:#ecb1a7">Stack Trace:
  File "/usr/local/lib/python3.12/site-packages/dagster/_core/execution/plan/execute_plan.py", line 245, in dagster_event_sequence_for_step
    yield from check.generator(step_events)
,  File "/usr/local/lib/python3.12/site-packages/dagster/_core/execution/plan/execute_step.py", line 501, in
core_dagster_event_sequence_for_step
    for user_event in _step_output_error_checked_user_event_sequence(
                      ^^^^^^^^^^^^^^^^^^^^^^^^^^^^^^^^^^^^^^^^^^^^^^^
,  File "/usr/local/lib/python3.12/site-packages/dagster/_core/execution/plan/execute_step.py", line 184, in
_step_output_error_checked_user_event_sequence
    for user_event in user_event_sequence:
                      ^^^^^^^^^^^^^^^^^^^</pre></div>

<div class="a" style="left:1794px;top:1232px;width:317px;height:63px;border-radius:16px;background:#d2d6df"></div>
<svg class="a" style="left:1816px;top:1250px" width="20" height="28" viewBox="0 0 20 28" fill="none" stroke="#030617" stroke-width="2.8"><path d="M5 9 L10 4 L15 9 M5 19 L10 24 L15 19"/></svg>
<div class="a" style="left:1850px;top:1232px;line-height:63px;font-size:28px;color:#030617;letter-spacing:0.6px">View full message</div>

<div class="hl" style="left:480px;top:1307px;width:2946px"></div>
<div class="a mono" style="left:505px;top:1319px;line-height:30px;font-size:24px;color:#a3a8b5">1:02:05.523 PM</div>
<div class="a mono" style="left:738px;top:1318px;line-height:30px;font-size:24px;color:#f3f4f7">-</div>
<div class="a" style="left:1024px;top:1318px;width:205px;height:47px;border-radius:14px;background:#151928"></div>
<div class="a mono" style="left:1040px;top:1318px;line-height:47px;font-size:24px;color:#f3f4f7">ENGINE_EVENT</div>
<div class="a mono" style="left:1320px;top:1328px;line-height:30px;font-size:24px;color:#f3f4f7">Multiprocess executor: parent process exiting after 1m25s (pid: 1)</div>
<div class="a" style="left:1320px;top:1366px;width:2082px;height:51px;background:#1f2334;border:2px solid #2d3243"></div>
<div class="a" style="left:1322px;top:1368px;width:76px;height:47px;background:#181c2b;border-right:2px solid #2d3243"></div>
<div class="a mono" style="left:1338px;top:1368px;line-height:47px;font-size:24px;color:#a3a8b5">pid</div>
<div class="a mono" style="left:1414px;top:1368px;line-height:47px;font-size:24px;color:#f3f4f7">1</div>
<div class="hl" style="left:480px;top:1435px;width:2946px"></div>
<div class="a mono" style="left:505px;top:1446px;line-height:30px;font-size:24px;color:#a3a8b5">1:02:05.596 PM</div>
<div class="a mono" style="left:738px;top:1446px;line-height:30px;font-size:24px;color:#f3f4f7">-</div>
<div class="a" style="left:1024px;top:1446px;width:190px;height:47px;border-radius:14px;background:#25101a"></div>
<div class="a mono" style="left:1040px;top:1446px;line-height:47px;font-size:24px;color:#ecb1a7">RUN_FAILURE</div>
<div class="a mono" style="left:1320px;top:1454px;line-height:30px;font-size:24px;color:#f3f4f7">Execution of run for "__ASSET_JOB" failed. Steps failed: ['wbr_reporting'].</div>

</body></html>
